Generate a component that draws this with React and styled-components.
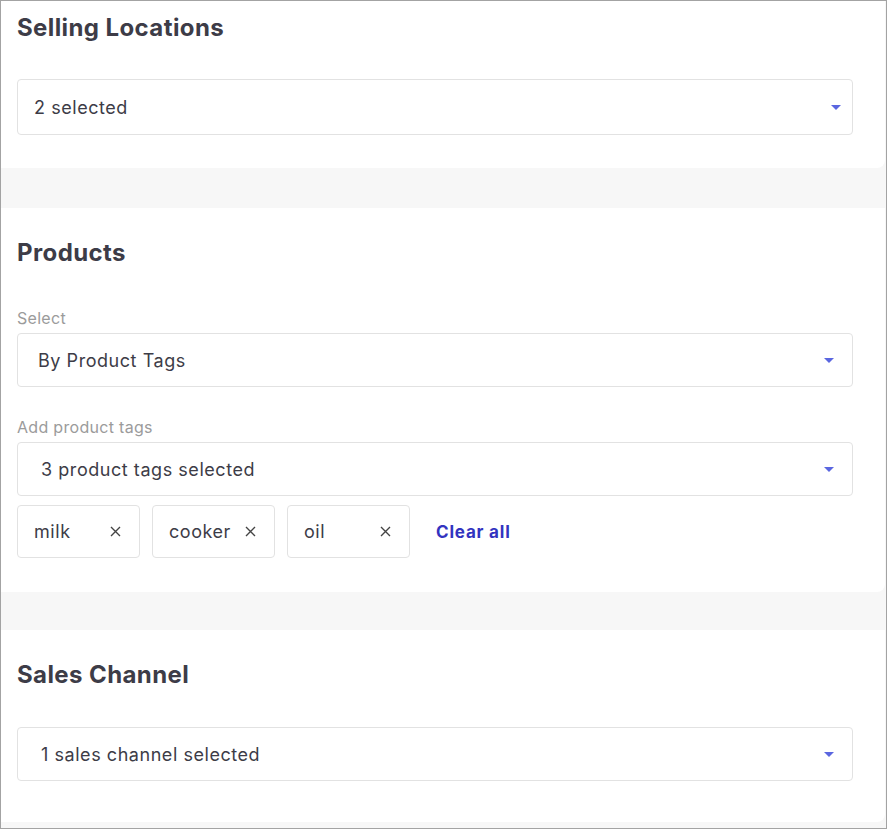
import React from 'react'
import styled, { createGlobalStyle } from 'styled-components'

const Global = createGlobalStyle`
  html, body { margin: 0; padding: 0; }
  body { font-family: Inter, "Noto Sans", sans-serif; background: #fff; }
  * { box-sizing: border-box; }
`

const Frame = styled.div`
  width: 887px;
  height: 829px;
  border: 1px solid #a3a3a3;
  background: #f7f7f7;
  display: flex;
  flex-direction: column;
  overflow: hidden;
`

const Card = styled.section`
  background: #fff;
  border-radius: 0 0 8px 0;
  width: 884px;
  margin-top: ${p => p.gap || 0}px;
  padding: ${p => p.pad};
  display: flex;
  flex-direction: column;
  flex-shrink: 0;
`

const Title = styled.h2`
  margin: 0;
  font-size: 24px;
  line-height: 30px;
  font-weight: 700;
  color: #3d3c47;
  letter-spacing: 0.4px;
`

const Label = styled.div`
  font-size: 16px;
  line-height: 20px;
  color: #9b9b9b;
  letter-spacing: 0.3px;
  margin-top: ${p => p.top}px;
  margin-bottom: 5px;
`

const SelectBox = styled.div`
  width: 836px;
  height: ${p => p.h}px;
  margin-top: ${p => p.top || 0}px;
  border: 1px solid #e2e2e2;
  border-radius: 4px;
  display: flex;
  align-items: center;
  justify-content: space-between;
  padding: 0 ${p => p.end}px 0 ${p => p.indent}px;
  font-size: 18px;
  letter-spacing: 0.55px;
  color: #3d3c47;
`

const Caret = styled.span`
  width: 0;
  height: 0;
  border-left: 5.5px solid transparent;
  border-right: 5.5px solid transparent;
  border-top: 5.5px solid #5a66e0;
`

const ChipRow = styled.div`
  display: flex;
  align-items: center;
  gap: 12px;
  margin-top: 9px;
`

const Chip = styled.div`
  width: 123px;
  height: 53px;
  border: 1px solid #e2e2e2;
  border-radius: 4px;
  display: flex;
  align-items: center;
  justify-content: space-between;
  padding: 0 18px 0 16px;
  font-size: 18px;
  letter-spacing: 0.55px;
  color: #3d3c47;
`

const ClearAll = styled.span`
  margin-left: 14px;
  font-size: 17px;
  font-weight: 700;
  letter-spacing: 0.8px;
  color: #3234c0;
`

const Close = () => (
  <svg width="11" height="11" viewBox="0 0 11 11">
    <path d="M1 1L10 10M10 1L1 10" stroke="#444" strokeWidth="1.4" />
  </svg>
)

function Select({ children, end = 18, ...rest }) {
  return (
    <SelectBox end={end} {...rest}>
      <span>{children}</span>
      <Caret />
    </SelectBox>
  )
}

export default function App() {
  return (
    <>
      <Global />
      <Frame>
        <Card pad="12px 32px 33px 16px">
          <Title>Selling Locations</Title>
          <Select h={56} top={36} indent={16} end={11}>2 selected</Select>
        </Card>
        <Card gap={40} pad="30px 32px 34px 16px">
          <Title>Products</Title>
          <Label top={40}>Select</Label>
          <Select h={54} indent={20}>By Product Tags</Select>
          <Label top={30}>Add product tags</Label>
          <Select h={54} indent={23}>3 product tags selected</Select>
          <ChipRow>
            {['milk', 'cooker', 'oil'].map(t => (
              <Chip key={t}>
                <span>{t}</span>
                <Close />
              </Chip>
            ))}
            <ClearAll>Clear all</ClearAll>
          </ChipRow>
        </Card>
        <Card gap={38} pad="30px 32px 41px 16px">
          <Title>Sales Channel</Title>
          <Select h={54} top={37} indent={23}>1 sales channel selected</Select>
        </Card>
      </Frame>
    </>
  )
}
